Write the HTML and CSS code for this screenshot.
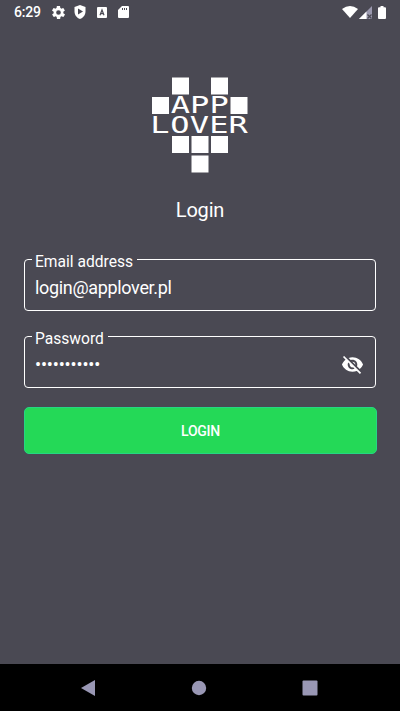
FILE: index.html
```html
<!DOCTYPE html>
<html lang="en">
<head>
<meta charset="utf-8">
<title>Login</title>
<link rel="stylesheet" href="styles.css">
</head>
<body>
<div class="screen">
  <header class="status">
    <span class="clock">6:29</span>
    <svg class="gear" viewBox="2 2 20 20"><path fill-rule="evenodd" d="M19.4 13c.1-.7.1-1.300 0-2l2.100-1.600c.2-.2.3-.4.1-.7l-2-3.400c-.1-.2-.4-.3-.6-.2l-2.500 1c-.5-.4-1.100-.7-1.700-1l-.4-2.600c0-.3-.2-.5-.5-.5h-4c-.2 0-.4.200-.5.4l-.4 2.700c-.6.200-1.200.6-1.700 1l-2.500-1c-.2-.1-.5 0-.6.2l-2 3.400c-.1.200-.1.500.1.600L4.600 11c-.1.600-.1 1.300 0 2l-2.100 1.600c-.2.200-.2.500-.1.700l2 3.400c.1.200.4.300.6.200l2.500-1c.5.400 1.100.7 1.700 1l.4 2.600c0 .3.200.5.5.5h4c.3 0 .5-.2.5-.5l.4-2.600c.6-.3 1.200-.6 1.700-1l2.500 1c.2.100.5 0 .6-.2l2-3.400c.1-.2.100-.5-.1-.7zM12 15.600a3.600 3.600 0 1 1 0-7.200 3.600 3.600 0 0 1 0 7.200z"/></svg>
    <svg class="shield" viewBox="0 0 12 14"><path fill-rule="evenodd" d="M6 0 11.500 2v4.500C11.500 10 9 13 6 14 3 13 .5 10 .5 6.500V2zM4 3.600v6L9 6.600z"/></svg>
    <svg class="card" viewBox="0 0 10 11"><rect width="10" height="11" rx="1"/><path class="mark" d="M3 8.300 5 3l2 5.300M3.700 6.600h2.600"/></svg>
    <svg class="sd" viewBox="0 0 11 12"><path fill-rule="evenodd" d="M4 0h6q1 0 1 1v10q0 1-1 1H1q-1 0-1-1V4zM4 2v2h1V2zM6 2v2h1V2zM8 2v2h1V2z"/></svg>
    <span class="spacer"></span>
    <svg class="wifi" viewBox="0 0 16 12"><path d="M0 3Q8-3 16 3L8 12z"/></svg>
    <svg class="signal" viewBox="0 0 13 13"><path class="dim" d="M13 0v13H0z"/><path d="M7.500 5.500V13H0z"/><path class="cross" d="m8.500 8.500 4 4m0-4-4 4"/></svg>
    <svg class="battery" viewBox="0 0 8 13"><path d="M2.500 0h3v1.300H7q1 0 1 1V12q0 1-1 1H1q-1 0-1-1V2.300q0-1 1-1h1.500z"/></svg>
  </header>
  <main>
    <svg class="logo" viewBox="0 0 96 96">
      <rect x="20" y="0.500" width="17" height="17"/><rect x="59" y="0.500" width="17" height="17"/>
      <rect x="0" y="20" width="17" height="17"/><rect x="78.500" y="20" width="17" height="17"/>
      <rect x="20" y="59" width="17" height="17"/><rect x="39.500" y="59" width="17" height="17"/><rect x="59" y="59" width="17" height="17"/>
      <rect x="39.500" y="78.500" width="17" height="17"/>
      <text transform="scale(1.38 1)"><tspan x="13.600 27.500 41.600" y="36.500">APP</tspan><tspan x="-1.300 13.200 27.300 41.500 55.400" y="56.500">LOVER</tspan></text>
    </svg>
    <h1>Login</h1>
    <fieldset class="email">
      <legend>Email address</legend>
      <div class="value">login@applover.pl</div>
    </fieldset>
    <fieldset class="password">
      <legend>Password</legend>
      <div class="value"><span class="dots">•••••••••••</span>
        <svg class="eye" viewBox="0 0 24 24"><path d="M12 7c2.760 0 5 2.240 5 5 0 .65-.13 1.260-.36 1.830l2.920 2.920c1.510-1.260 2.700-2.890 3.430-4.750-1.730-4.390-6-7.500-11-7.500-1.400 0-2.740.25-3.980.7l2.160 2.160C10.740 7.130 11.350 7 12 7zM2 4.270l2.280 2.280.46.46C3.080 8.300 1.780 10.020 1 12c1.730 4.390 6 7.500 11 7.500 1.550 0 3.030-.3 4.380-.84l.42.42L19.730 22 21 20.730 3.270 3 2 4.270zM7.530 9.800l1.550 1.550c-.05.21-.08.43-.08.65 0 1.660 1.340 3 3 3 .22 0 .44-.03.65-.08l1.550 1.550c-.67.33-1.410.53-2.200.53-2.760 0-5-2.240-5-5 0-.79.2-1.530.53-2.200zm4.310-.78 3.150 3.150.02-.16c0-1.660-1.340-3-3-3l-.17.01z"/></svg>
      </div>
    </fieldset>
    <button>LOGIN</button>
  </main>
  <nav>
    <svg viewBox="0 0 16 16"><path d="M15 0v16L1 8z"/></svg>
    <svg viewBox="0 0 16 16"><circle cx="8" cy="8" r="7.200"/></svg>
    <svg viewBox="0 0 16 16"><rect x=".5" y=".5" width="15" height="15" rx="1"/></svg>
  </nav>
</div>
</body>
</html>
```
FILE: styles.css
```css
* { box-sizing: border-box; }
body { margin: 0; background: #4a4953; color: #fff; font-family: Roboto, sans-serif; }
svg { display: block; flex: none; fill: #fff; }
.screen { height: 711px; display: flex; flex-direction: column; }
.status { height: 24px; padding: 0 14px; display: flex; align-items: center; }
.clock { width: 38px; font-size: 14px; font-weight: 500; line-height: 24px; letter-spacing: -.2px; }
.gear { width: 13px; height: 13px; }
.shield { width: 12px; height: 14px; margin-left: 9px; }
.card { width: 10px; height: 11px; margin-left: 11px; }
.mark { fill: none; stroke: #4a4953; stroke-width: 1.2; }
.sd { width: 11px; height: 12px; margin-left: 11px; }
.spacer { flex: 1; }
.wifi { width: 16px; height: 12px; }
.signal { width: 13px; height: 13px; margin-left: 1px; }
.dim { fill: #9a98ae; }
.cross { stroke: #4a4953; stroke-width: 1.2; }
.battery { width: 8px; height: 13px; margin: 0 0 0 6px; }
main { flex: 1; padding: 53px 24px 0; display: flex; flex-direction: column; }
.logo { width: 96px; height: 96px; align-self: center; overflow: visible; }
.logo text { font-family: "DejaVu Sans Mono", monospace; font-size: 23.2px; }
h1 { margin: 24px 0 0; font-size: 20px; font-weight: 400; line-height: 26px; text-align: center; letter-spacing: -.2px; }
fieldset { width: 352px; min-width: 0; margin: 0; padding: 0 10px; border: 1px solid #fff; border-radius: 4px; }
legend { margin-left: -3px; padding: 5px 4px 0 3px; font-size: 15.6px; line-height: 18px; }
.email { margin-top: 25px; height: 63px; }
.password { margin-top: 14px; height: 63px; }
.value { height: 32px; display: flex; align-items: center; justify-content: space-between; font-size: 18px; letter-spacing: -.33px; }
.dots { font-size: 18px; letter-spacing: -.15px; }
.eye { width: 23px; height: 23px; margin-right: 1px; }
button { width: 353px; height: 47px; margin: 19px 0 0; padding: 0; border: 1px solid #25d783; border-radius: 5px; background: #24d957; color: #fff; font: 500 14px Roboto, sans-serif; letter-spacing: -.25px; }
nav { height: 47px; padding: 0 82px 0 80px; background: #000; display: flex; align-items: center; justify-content: space-between; }
nav svg { width: 16px; height: 16px; fill: #9997b4; }
```
